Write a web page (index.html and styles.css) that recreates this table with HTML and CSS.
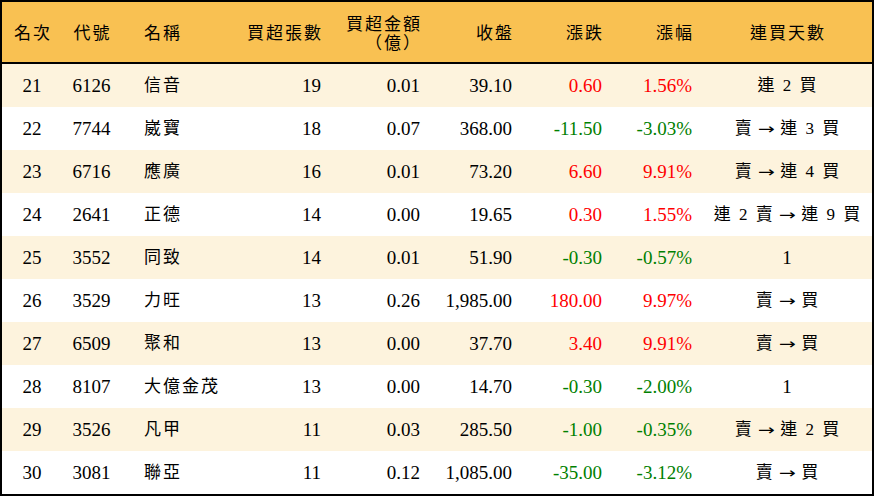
FILE: index.html
```html
<!DOCTYPE html>
<html lang="zh-Hant">
<head>
<meta charset="utf-8">
<title>買超排行</title>
<link rel="stylesheet" href="styles.css">
</head>
<body>
<div class="board">
  <div class="row head">
    <div class="c center cjk">名次</div>
    <div class="c center cjk">代號</div>
    <div class="c left cjk">名稱</div>
    <div class="c right cjk">買超張數</div>
    <div class="c right cjk two">買超金額<br>（億）</div>
    <div class="c right cjk">收盤</div>
    <div class="c right cjk">漲跌</div>
    <div class="c right cjk">漲幅</div>
    <div class="c center cjk">連買天數</div>
  </div>
  <div class="row odd">
    <div class="c center">21</div><div class="c center">6126</div><div class="c left cjk">信音</div>
    <div class="c right">19</div><div class="c right">0.01</div><div class="c right">39.10</div>
    <div class="c right up">0.60</div><div class="c right up">1.56%</div><div class="c center cjk">連 2 買</div>
  </div>
  <div class="row">
    <div class="c center">22</div><div class="c center">7744</div><div class="c left cjk">崴寶</div>
    <div class="c right">18</div><div class="c right">0.07</div><div class="c right">368.00</div>
    <div class="c right down">-11.50</div><div class="c right down">-3.03%</div><div class="c center cjk">賣<span class="arr">→</span>連 3 買</div>
  </div>
  <div class="row odd">
    <div class="c center">23</div><div class="c center">6716</div><div class="c left cjk">應廣</div>
    <div class="c right">16</div><div class="c right">0.01</div><div class="c right">73.20</div>
    <div class="c right up">6.60</div><div class="c right up">9.91%</div><div class="c center cjk">賣<span class="arr">→</span>連 4 買</div>
  </div>
  <div class="row">
    <div class="c center">24</div><div class="c center">2641</div><div class="c left cjk">正德</div>
    <div class="c right">14</div><div class="c right">0.00</div><div class="c right">19.65</div>
    <div class="c right up">0.30</div><div class="c right up">1.55%</div><div class="c center cjk">連 2 賣<span class="arr">→</span>連 9 買</div>
  </div>
  <div class="row odd">
    <div class="c center">25</div><div class="c center">3552</div><div class="c left cjk">同致</div>
    <div class="c right">14</div><div class="c right">0.01</div><div class="c right">51.90</div>
    <div class="c right down">-0.30</div><div class="c right down">-0.57%</div><div class="c center">1</div>
  </div>
  <div class="row">
    <div class="c center">26</div><div class="c center">3529</div><div class="c left cjk">力旺</div>
    <div class="c right">13</div><div class="c right">0.26</div><div class="c right">1,985.00</div>
    <div class="c right up">180.00</div><div class="c right up">9.97%</div><div class="c center cjk">賣<span class="arr">→</span>買</div>
  </div>
  <div class="row odd">
    <div class="c center">27</div><div class="c center">6509</div><div class="c left cjk">聚和</div>
    <div class="c right">13</div><div class="c right">0.00</div><div class="c right">37.70</div>
    <div class="c right up">3.40</div><div class="c right up">9.91%</div><div class="c center cjk">賣<span class="arr">→</span>買</div>
  </div>
  <div class="row">
    <div class="c center">28</div><div class="c center">8107</div><div class="c left cjk">大億金茂</div>
    <div class="c right">13</div><div class="c right">0.00</div><div class="c right">14.70</div>
    <div class="c right down">-0.30</div><div class="c right down">-2.00%</div><div class="c center">1</div>
  </div>
  <div class="row odd">
    <div class="c center">29</div><div class="c center">3526</div><div class="c left cjk">凡甲</div>
    <div class="c right">11</div><div class="c right">0.03</div><div class="c right">285.50</div>
    <div class="c right down">-1.00</div><div class="c right down">-0.35%</div><div class="c center cjk">賣<span class="arr">→</span>連 2 買</div>
  </div>
  <div class="row">
    <div class="c center">30</div><div class="c center">3081</div><div class="c left cjk">聯亞</div>
    <div class="c right">11</div><div class="c right">0.12</div><div class="c right">1,085.00</div>
    <div class="c right down">-35.00</div><div class="c right down">-3.12%</div><div class="c center cjk">賣<span class="arr">→</span>買</div>
  </div>
</div>
</body>
</html>
```

FILE: styles.css
```css
html, body {
  margin: 0;
  padding: 0;
  background: #ffffff;
}

.board {
  width: 870px;
  border: 2px solid #000;
  font-family: "Liberation Serif", "Noto Sans CJK TC", serif;
  font-size: 19px;
  color: #000;
  background: #fff;
}

.row {
  display: grid;
  grid-template-columns: 60px 59px 110px 100px 99px 92px 90px 90px 170px;
  height: 43px;
  align-items: center;
}

.row.odd {
  background: #fdf3dd;
}

.row.head {
  height: 60px;
  background: #f9c152;
  border-bottom: 2px solid #000;
}

.c {
  white-space: nowrap;
  line-height: 22px;
}

.center { text-align: center; }
.left { text-align: left; padding-left: 23px; }
.right { text-align: right; padding-right: 10px; }

.cjk {
  font-size: 17px;
  letter-spacing: 2px;
}

.center.cjk {
  padding-left: 2px;
}

.right.cjk {
  padding-right: 8px;
}

.two {
  line-height: 19px;
  padding-top: 2px;
}

.row.head .c {
  padding-top: 3px;
}

.arr {
  display: inline-block;
  font-family: "DejaVu Sans", sans-serif;
  font-size: 15px;
  transform: scaleX(1.35);
  margin: 0 8px 0 6px;
  letter-spacing: 0;
}

.up { color: #ff0000; }
.down { color: #008000; }
```
